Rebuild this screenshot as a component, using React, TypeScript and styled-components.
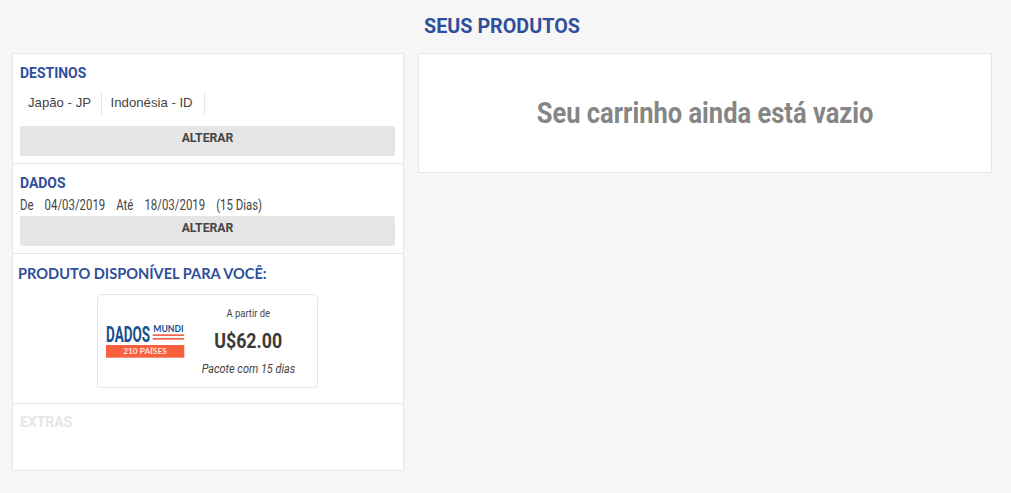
import React from "react";
import styled, { createGlobalStyle } from "styled-components";

const Global = createGlobalStyle`
  html, body { margin: 0; padding: 0; background: #f6f6f6; }
  * { box-sizing: border-box; }
  body { font-family: Roboto, "Liberation Sans", sans-serif; color: #333; }
`;
const blue = "#2f4f9c";

const Page = styled.div`
  width: 1011px; height: 493px; padding: 0 19px 0 12px; overflow: hidden;
`;
const Title = styled.h1`
  margin: 0; height: 53px; padding-top: 14px; text-align: center;
  font: 700 21px/24px Roboto, sans-serif; color: ${blue};
  transform: scaleX(.94);
`;
const Columns = styled.div`
  display: grid; grid-template-columns: 392px 574px; column-gap: 14px; align-items: start;
`;
const Side = styled.aside`
  height: 418px; background: #fff; border: 1px solid #e6e6e6; display: flex; flex-direction: column;
`;
const Section = styled.section<{ $h: number }>`
  height: ${p => p.$h}px; padding: 0 8px 0 7px; border-bottom: 1px solid #e6e6e6;
  &:last-child { border-bottom: 0; }
`;
const Heading = styled.h2<{ $muted?: boolean; $top?: number }>`
  margin: 0; padding-top: ${p => p.$top ?? 10}px; font: 700 15px/18px Roboto, sans-serif;
  color: ${p => (p.$muted ? "#e6e6e6" : blue)};
  transform: scaleX(.93); transform-origin: left;
`;
const Chips = styled.div`
  display: flex; height: 23px; margin-top: 10px; align-items: center;
`;
const Chip = styled.span`
  height: 23px; padding: 0 9.5px 0 8px; border-right: 1px solid #e6e6e6;
  font: 400 13.2px/22px "Liberation Sans", sans-serif; color: #444;
  & + & { padding: 0 11px 0 9px; }
`;
const Change = styled.button<{ $top: number }>`
  display: block; width: 100%; height: 30px; margin-top: ${p => p.$top}px;
  border: 0; border-radius: 2px; background: #e5e5e5;
  font: 700 12.2px/24px Roboto, sans-serif; color: #444; padding: 0 0 6px;
`;
const Dates = styled.div`
  display: flex; gap: 13.5px; height: 16px; margin-top: 5px;
  font: 400 14px/16px Roboto, sans-serif; color: #444;
  transform: scaleX(.815); transform-origin: left; white-space: nowrap;
`;
const ProductHead = styled.h2`
  margin: 0; padding-top: 11px; margin-left: -2px;
  font: 700 14.6px/18px Lato, sans-serif; color: ${blue};
`;
const CardRow = styled.div`
  display: flex; justify-content: center; margin-top: 11px;
`;
const Card = styled.article`
  width: 221px; height: 94px; border: 1px solid #e6e6e6; border-radius: 4px; background: #fff;
  display: grid; grid-template-columns: 88px 1fr; padding-left: 8px; align-items: center;
`;
const Price = styled.div`
  display: flex; flex-direction: column; align-items: center; padding-right: 15px;
`;
const From = styled.span`
  font: 400 10.5px/14px Roboto, sans-serif; color: #444; margin-top: 1px;
  transform: scaleX(.9);
`;
const Amount = styled.strong`
  font: 700 20px/26px Roboto, sans-serif; color: #3a3a3a; margin-top: 7px;
  transform: scaleX(.89);
`;
const Note = styled.em`
  font: italic 400 12px/14px Roboto, sans-serif; color: #444; margin-top: 8px;
  transform: scaleX(.91);
`;
const Main = styled.main`
  height: 120px; background: #fff; border: 1px solid #e6e6e6;
  display: flex; align-items: center; justify-content: center;
`;
const Empty = styled.p`
  margin: 0 0 1px; font: 700 30px/36px Roboto, sans-serif; color: #858585;
  transform: scaleX(.85);
`;
const LogoArt = styled.svg`
  display: block; overflow: visible;
`;

const Logo = () => (
  <LogoArt width="80" height="36" viewBox="0 0 80 36" aria-label="Dados Mundi 210 países">
    <text transform="translate(0 18.7) scale(.6 1)" fontFamily="Roboto, sans-serif" fontWeight="700" fontSize="22.5" fill="#16508f">DADOS</text>
    <text transform="translate(47.3 9.3) scale(.96 1)" fontFamily="Lato, sans-serif" fontWeight="700" fontSize="9" fill="#16508f">MUNDI</text>
    <rect x="46.7" y="11.3" width="31.5" height="1.7" fill="#f0644a" />
    <rect x="46.7" y="15" width="31.5" height="1.7" fill="#f0644a" />
    <rect x="0" y="22" width="78.3" height="12.7" fill="#f9603f" />
    <text x="39" y="31.3" textAnchor="middle" fontFamily="Lato, sans-serif" fontWeight="700" fontSize="8.4" fill="#fde3db">210 PAÍSES</text>
  </LogoArt>
);

export default function App() {
  return (
    <Page>
      <Global />
      <Title>SEUS PRODUTOS</Title>
      <Columns>
        <Side>
          <Section $h={110}>
            <Heading>DESTINOS</Heading>
            <Chips><Chip>Japão - JP</Chip><Chip>Indonésia - ID</Chip></Chips>
            <Change $top={11}>ALTERAR</Change>
          </Section>
          <Section $h={90}>
            <Heading>DADOS</Heading>
            <Dates><span>De</span><span>04/03/2019</span><span>Até</span><span>18/03/2019</span><span>(15 Dias)</span></Dates>
            <Change $top={3}>ALTERAR</Change>
          </Section>
          <Section $h={150}>
            <ProductHead>PRODUTO DISPONÍVEL PARA VOCÊ:</ProductHead>
            <CardRow>
              <Card>
                <Logo />
                <Price>
                  <From>A partir de</From>
                  <Amount>U$62.00</Amount>
                  <Note>Pacote com 15 dias</Note>
                </Price>
              </Card>
            </CardRow>
          </Section>
          <Section $h={66}>
            <Heading $muted $top={9}>EXTRAS</Heading>
          </Section>
        </Side>
        <Main><Empty>Seu carrinho ainda está vazio</Empty></Main>
      </Columns>
    </Page>
  );
}
